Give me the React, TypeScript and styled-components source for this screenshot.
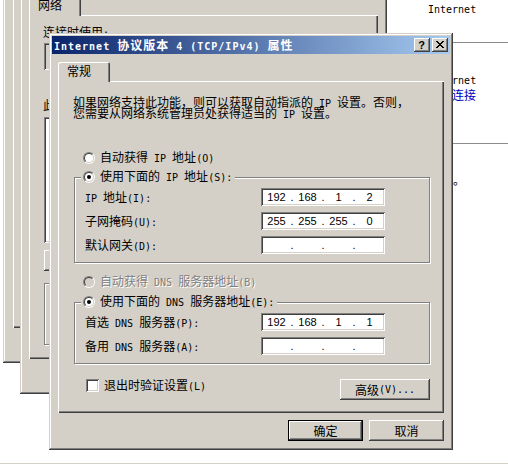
import React from 'react';
import styled, { createGlobalStyle } from 'styled-components';

const FACE = '#d4d0c8';
const SHADOW = '#808080';
const DARK = '#404040';

const GlobalStyle = createGlobalStyle`
  html, body { margin: 0; padding: 0; background: #fff; }
  body {
    font-family: "Noto Sans CJK SC", "Liberation Sans", sans-serif;
    font-size: 12px;
    color: #000;
    overflow: hidden;
  }
  *, *::before, *::after { box-sizing: border-box; }
`;

/* half-width latin run, SimSun-like 6px advance */
const Lat = styled.span`
  font-family: "DejaVu Sans Mono", "Liberation Mono", monospace;
  font-size: 10px;
`;

function mix(s: string): React.ReactNode {
  return s
    .split(/([\x20-\x7e]+)/)
    .filter(Boolean)
    .map((p, i) =>
      /^[\x20-\x7e]+$/.test(p) ? <Lat key={i}>{p}</Lat> : <React.Fragment key={i}>{p}</React.Fragment>
    );
}

/* ---------- desktop / explorer ---------- */
const Desktop = styled.div`
  position: relative;
  width: 508px;
  height: 465px;
  overflow: hidden;
  background: #fff;
  display: flex;
  flex-direction: column;
`;

const Explorer = styled.div`
  flex: 1;
  padding-left: 387px;
  display: flex;
  flex-direction: column;
`;

const ExplorerText = styled.div<{ $indent: number; $top: number; $link?: boolean }>`
  flex: none;
  margin-left: ${p => p.$indent}px;
  margin-top: ${p => p.$top}px;
  height: 12px;
  line-height: 12px;
  white-space: nowrap;
  color: ${p => (p.$link ? '#0000c0' : '#000')};
`;

const ExplorerRule = styled.div<{ $top: number }>`
  flex: none;
  margin-top: ${p => p.$top}px;
  height: 1px;
  background: #8c8c8c;
`;

const StatusBar = styled.div`
  flex: none;
  height: 2px;
  border-top: 1px solid ${FACE};
`;

/* ---------- window chrome ---------- */
const Window = styled.div<{ $x: number; $y: number; $w: number; $h: number }>`
  position: absolute;
  left: ${p => p.$x}px;
  top: ${p => p.$y}px;
  width: ${p => p.$w}px;
  height: ${p => p.$h}px;
  padding: 3px;
  background: ${FACE};
  box-shadow: inset -1px -1px ${DARK}, inset 1px 1px ${FACE}, inset -2px -2px ${SHADOW}, inset 2px 2px #fff;
  display: flex;
  flex-direction: column;
`;

const TitleBar = styled.div<{ $active?: boolean }>`
  flex: none;
  height: 18px;
  display: flex;
  align-items: flex-start;
  gap: 2px;
  padding: 0 2px;
  background: ${p =>
    p.$active ? 'linear-gradient(90deg, #0a246a, #a6caf0)' : 'linear-gradient(90deg, #808080, #c0c0c0)'};
  color: ${p => (p.$active ? '#fff' : FACE)};
`;

const TitleText = styled.div`
  flex: 1;
  min-width: 0;
  height: 18px;
  font-weight: 700;
  letter-spacing: 1px;
  line-height: 18px;
  white-space: nowrap;
  overflow: hidden;
`;

const CaptionButton = styled.div`
  flex: none;
  width: 16px;
  height: 14px;
  margin-top: 2px;
  padding-top: 3px;
  display: flex;
  justify-content: center;
  align-items: flex-start;
  background: ${FACE};
  color: #000;
  box-shadow: inset -1px -1px ${DARK}, inset 1px 1px #fff, inset -2px -2px ${SHADOW}, inset 2px 2px ${FACE};
`;

const HelpGlyph = styled.span`
  font-family: "Liberation Sans", sans-serif;
  font-weight: 700;
  font-size: 11px;
  line-height: 9px;
  margin-left: -1px;
`;

const CloseGlyph = () => (
  <svg width="8" height="7" viewBox="0 0 8 7" shapeRendering="crispEdges">
    <path
      d="M0 0h2v1H0zM6 0h2v1H6zM1 1h2v1H1zM5 1h2v1H5zM2 2h4v1H2zM3 3h2v1H3zM2 4h4v1H2zM1 5h2v1H1zM5 5h2v1H5zM0 6h2v1H0zM6 6h2v1H6z"
      fill="#000"
    />
  </svg>
);

const DialogBody = styled.div<{ $pl: number; $pr: number; $pb: number }>`
  flex: 1;
  min-height: 0;
  display: flex;
  flex-direction: column;
  padding: 8px ${p => p.$pr}px ${p => p.$pb}px ${p => p.$pl}px;
`;

const TabStrip = styled.div`
  flex: none;
  height: 19px;
  display: flex;
  position: relative;
  z-index: 1;
`;

const Tab = styled.div`
  width: 52px;
  height: 20px;
  padding: 2px 0 0 9px;
  line-height: 14px;
  white-space: nowrap;
  background: ${FACE};
  border-radius: 2px 2px 0 0;
  box-shadow: inset 1px 1px #fff, inset -1px 0 ${DARK}, inset -2px 0 ${SHADOW};
`;

const Panel = styled.div<{ $pad: string }>`
  flex: 1;
  min-height: 0;
  display: flex;
  flex-direction: column;
  padding: ${p => p.$pad};
  background: ${FACE};
  box-shadow: inset 1px 1px #fff, inset -1px -1px ${DARK}, inset -2px -2px ${SHADOW};
`;

const ButtonRow = styled.div`
  flex: none;
  display: flex;
  justify-content: flex-end;
  gap: 6px;
  margin-top: 7px;
`;

const PushButton = styled.button<{ $w: number; $default?: boolean }>`
  flex: none;
  width: ${p => p.$w}px;
  height: 21px;
  margin: 0;
  padding: 0;
  border: 0;
  font: inherit;
  color: #000;
  line-height: 12px;
  white-space: nowrap;
  background: ${FACE};
  display: flex;
  align-items: center;
  justify-content: center;
  box-shadow: ${p =>
    p.$default
      ? `inset 0 0 0 1px #000, inset -2px -2px ${DARK}, inset 2px 2px #fff, inset -3px -3px ${SHADOW}`
      : `inset -1px -1px ${DARK}, inset 1px 1px #fff, inset -2px -2px ${SHADOW}, inset 2px 2px ${FACE}`};
`;

/* ---------- controls ---------- */
const Intro = styled.div`
  flex: none;
  height: 11px;
  line-height: 11px;
  white-space: nowrap;
`;

const OptionRow = styled.div<{ $top: number }>`
  flex: none;
  display: flex;
  align-items: center;
  gap: 5px;
  height: 14px;
  margin: ${p => p.$top}px 0 0 10px;
  line-height: 14px;
  white-space: nowrap;
`;

const OptionText = styled.span<{ $disabled?: boolean }>`
  color: ${p => (p.$disabled ? SHADOW : '#000')};
  text-shadow: ${p => (p.$disabled ? '1px 1px 0 #fff' : 'none')};
`;

const RadioOuter = styled.span`
  flex: none;
  width: 12px;
  height: 12px;
  border-radius: 50%;
  border: 1px solid;
  border-color: ${SHADOW} #fff #fff ${SHADOW};
  display: flex;
`;

const RadioInner = styled.span<{ $disabled?: boolean }>`
  width: 10px;
  height: 10px;
  border-radius: 50%;
  border: 1px solid;
  border-color: ${DARK} ${FACE} ${FACE} ${DARK};
  background: ${p => (p.$disabled ? FACE : '#fff')};
  display: flex;
  align-items: center;
  justify-content: center;
`;

const RadioDot = styled.span`
  width: 4px;
  height: 4px;
  border-radius: 50%;
  background: #000;
`;

function Radio({ checked, disabled }: { checked?: boolean; disabled?: boolean }) {
  return (
    <RadioOuter>
      <RadioInner $disabled={disabled}>{checked && <RadioDot />}</RadioInner>
    </RadioOuter>
  );
}

const GroupBox = styled.div<{ $top: number; $pad: string }>`
  position: relative;
  flex: none;
  margin: ${p => p.$top}px 0 0 1px;
  padding: ${p => p.$pad};
  border: 1px solid ${SHADOW};
  box-shadow: inset 1px 1px #fff, 1px 1px #fff;
`;

const Legend = styled.div`
  position: absolute;
  left: 6px;
  top: -8px;
  height: 14px;
  display: flex;
  align-items: center;
  gap: 5px;
  padding: 0 3px 0 2px;
  line-height: 14px;
  white-space: nowrap;
  background: ${FACE};
`;

const FieldGrid = styled.div`
  display: grid;
  grid-template-columns: 176px 124px;
  grid-auto-rows: 18px;
  row-gap: 6px;
  align-items: center;
`;

const FieldLabel = styled.span`
  height: 14px;
  line-height: 14px;
  white-space: nowrap;
`;

const IpBox = styled.div`
  height: 18px;
  padding-left: 3px;
  display: grid;
  grid-template-columns: 25px 6px 25px 6px 25px 6px 25px;
  align-items: center;
  background: #fff;
  font-family: "Liberation Sans", Arial, sans-serif;
  font-size: 11px;
  line-height: 12px;
  box-shadow: inset 1px 1px ${SHADOW}, inset -1px -1px #fff, inset 2px 2px ${DARK}, inset -2px -2px ${FACE};
`;

const Octet = styled.span`
  text-align: center;
`;

const IpDot = styled.span`
  text-align: center;
`;

function IpField({ value }: { value: string[] }) {
  return (
    <IpBox>
      {value.map((o, i) => (
        <React.Fragment key={i}>
          {i > 0 && <IpDot>.</IpDot>}
          <Octet>{o}</Octet>
        </React.Fragment>
      ))}
    </IpBox>
  );
}

const BottomRow = styled.div`
  flex: none;
  display: flex;
  justify-content: space-between;
  align-items: flex-start;
  margin-top: 15px;
`;

const CheckRow = styled.div`
  display: flex;
  align-items: center;
  gap: 5px;
  height: 13px;
  margin-left: 13px;
  line-height: 13px;
  white-space: nowrap;
`;

const CheckBox = styled.span`
  flex: none;
  width: 13px;
  height: 13px;
  background: #fff;
  box-shadow: inset 1px 1px ${SHADOW}, inset -1px -1px #fff, inset 2px 2px ${DARK}, inset -2px -2px ${FACE};
`;

/* ---------- background LAN properties window ---------- */
const PlainLabel = styled.div<{ $top: number }>`
  flex: none;
  height: 12px;
  margin-top: ${p => p.$top}px;
  line-height: 12px;
  white-space: nowrap;
`;

const AdapterBox = styled.div`
  flex: none;
  height: 27px;
  margin: 5px 0 0 1px;
  padding-left: 8px;
  display: flex;
  align-items: center;
  gap: 6px;
  white-space: nowrap;
  box-shadow: inset 1px 1px ${SHADOW}, inset -1px -1px #fff, inset 2px 2px ${DARK}, inset -2px -2px ${FACE};
`;

const AdapterIcon = styled.span`
  width: 16px;
  height: 14px;
  background: linear-gradient(#3a6ea5, #1c3f6e);
  border: 1px solid #0a246a;
`;

const RightButtons = styled.div<{ $top: number }>`
  flex: none;
  display: flex;
  justify-content: flex-end;
  gap: 6px;
  margin-top: ${p => p.$top}px;
`;

const LeftButtons = styled.div<{ $top: number }>`
  flex: none;
  display: flex;
  gap: 6px;
  margin: ${p => p.$top}px 0 0 1px;
`;

const ListBox = styled.div`
  flex: none;
  height: 126px;
  margin: 6px 0 0 1px;
  padding: 4px 2px 2px 6px;
  background: #fff;
  box-shadow: inset 1px 1px ${SHADOW}, inset -1px -1px #fff, inset 2px 2px ${DARK}, inset -2px -2px ${FACE};
  display: flex;
  flex-direction: column;
`;

const ListItem = styled.div<{ $selected?: boolean }>`
  height: 16px;
  line-height: 16px;
  padding-left: 18px;
  white-space: nowrap;
  background: ${p => (p.$selected ? '#0a246a' : 'transparent')};
  color: ${p => (p.$selected ? '#fff' : '#000')};
`;

export default function App() {
  return (
    <>
      <GlobalStyle />
      <Desktop>
        <Explorer>
          <ExplorerText $indent={41} $top={2}>{mix('Internet')}</ExplorerText>
          <ExplorerRule $top={28} />
          <ExplorerText $indent={41} $top={30}>{mix('Internet')}</ExplorerText>
          <ExplorerText $indent={41} $top={4} $link>本地连接</ExplorerText>
          <ExplorerRule $top={42} />
          <ExplorerText $indent={30} $top={30}>已启用。</ExplorerText>
        </Explorer>
        <StatusBar />

        {/* farthest window */}
        <Window $x={3} $y={-60} $w={370} $h={423}>
          <TitleBar>
            <TitleText>本地连接 状态</TitleText>
          </TitleBar>
          <DialogBody $pl={7} $pr={6} $pb={4}>
            <TabStrip>
              <Tab>常规</Tab>
            </TabStrip>
            <Panel $pad="12px 14px 0 14px" />
            <ButtonRow>
              <PushButton $w={75}>{mix('关闭(C)')}</PushButton>
            </ButtonRow>
          </DialogBody>
        </Window>

        {/* LAN connection properties */}
        <Window $x={20} $y={-33} $w={367} $h={427}>
          <TitleBar>
            <TitleText>本地连接 属性</TitleText>
          </TitleBar>
          <DialogBody $pl={6} $pr={6} $pb={4}>
            <TabStrip>
              <Tab>网络</Tab>
            </TabStrip>
            <Panel $pad="11px 14px 0 14px">
              <PlainLabel $top={0}>{mix('连接时使用:')}</PlainLabel>
              <AdapterBox>
                <AdapterIcon />
                {mix('Intel(R) PRO/1000 MT Network Connection')}
              </AdapterBox>
              <RightButtons $top={5}>
                <PushButton $w={75}>{mix('配置(C)...')}</PushButton>
              </RightButtons>
              <PlainLabel $top={3}>{mix('此连接使用下列项目(O):')}</PlainLabel>
              <ListBox>
                <ListItem>{mix('Microsoft 网络客户端')}</ListItem>
                <ListItem>{mix('QoS 数据包计划程序')}</ListItem>
                <ListItem>{mix('Microsoft 网络的文件和打印机共享')}</ListItem>
                <ListItem>{mix('Internet 协议版本 6 (TCP/IPv6)')}</ListItem>
                <ListItem $selected>{mix('Internet 协议版本 4 (TCP/IPv4)')}</ListItem>
              </ListBox>
              <LeftButtons $top={7}>
                <PushButton $w={75}>{mix('安装(N)...')}</PushButton>
                <PushButton $w={75}>{mix('卸载(U)')}</PushButton>
                <PushButton $w={75}>{mix('属性(R)')}</PushButton>
              </LeftButtons>
              <GroupBox $top={12} $pad="12px 8px 8px 8px">
                <Legend>描述</Legend>
                <PlainLabel $top={0}>{mix('TCP/IP 是默认的广域网协议。')}</PlainLabel>
                <PlainLabel $top={2}>{mix('它提供跨越多种互联网络的通讯。')}</PlainLabel>
                <PlainLabel $top={2}> </PlainLabel>
              </GroupBox>
            </Panel>
            <ButtonRow>
              <PushButton $w={75} $default>确定</PushButton>
              <PushButton $w={75}>取消</PushButton>
            </ButtonRow>
          </DialogBody>
        </Window>

        {/* TCP/IPv4 properties dialog */}
        <Window $x={49} $y={33} $w={404} $h={417}>
          <TitleBar $active>
            <TitleText>{mix('Internet 协议版本 4 (TCP/IPv4) 属性')}</TitleText>
            <CaptionButton>
              <HelpGlyph>?</HelpGlyph>
            </CaptionButton>
            <CaptionButton>
              <CloseGlyph />
            </CaptionButton>
          </TitleBar>
          <DialogBody $pl={6} $pr={6} $pb={6}>
            <TabStrip>
              <Tab>常规</Tab>
            </TabStrip>
            <Panel $pad="15px 14px 0 15px">
              <Intro>{mix('如果网络支持此功能，则可以获取自动指派的 IP 设置。否则，')}</Intro>
              <Intro>{mix('您需要从网络系统管理员处获得适当的 IP 设置。')}</Intro>

              <OptionRow $top={33}>
                <Radio />
                <OptionText>{mix('自动获得 IP 地址(O)')}</OptionText>
              </OptionRow>

              <GroupBox $top={12} $pad="10px 0 8px 10px">
                <Legend>
                  <Radio checked />
                  <OptionText>{mix('使用下面的 IP 地址(S):')}</OptionText>
                </Legend>
                <FieldGrid>
                  <FieldLabel>{mix('IP 地址(I):')}</FieldLabel>
                  <IpField value={['192', '168', '1', '2']} />
                  <FieldLabel>{mix('子网掩码(U):')}</FieldLabel>
                  <IpField value={['255', '255', '255', '0']} />
                  <FieldLabel>{mix('默认网关(D):')}</FieldLabel>
                  <IpField value={['', '', '', '']} />
                </FieldGrid>
              </GroupBox>

              <OptionRow $top={12}>
                <Radio disabled />
                <OptionText $disabled>{mix('自动获得 DNS 服务器地址(B)')}</OptionText>
              </OptionRow>

              <GroupBox $top={13} $pad="10px 0 8px 10px">
                <Legend>
                  <Radio checked />
                  <OptionText>{mix('使用下面的 DNS 服务器地址(E):')}</OptionText>
                </Legend>
                <FieldGrid>
                  <FieldLabel>{mix('首选 DNS 服务器(P):')}</FieldLabel>
                  <IpField value={['192', '168', '1', '1']} />
                  <FieldLabel>{mix('备用 DNS 服务器(A):')}</FieldLabel>
                  <IpField value={['', '', '', '']} />
                </FieldGrid>
              </GroupBox>

              <BottomRow>
                <CheckRow>
                  <CheckBox />
                  <span>{mix('退出时验证设置(L)')}</span>
                </CheckRow>
                <PushButton $w={90}>{mix('高级(V)...')}</PushButton>
              </BottomRow>
            </Panel>
            <ButtonRow>
              <PushButton $w={75} $default>确定</PushButton>
              <PushButton $w={75}>取消</PushButton>
            </ButtonRow>
          </DialogBody>
        </Window>
      </Desktop>
    </>
  );
}
